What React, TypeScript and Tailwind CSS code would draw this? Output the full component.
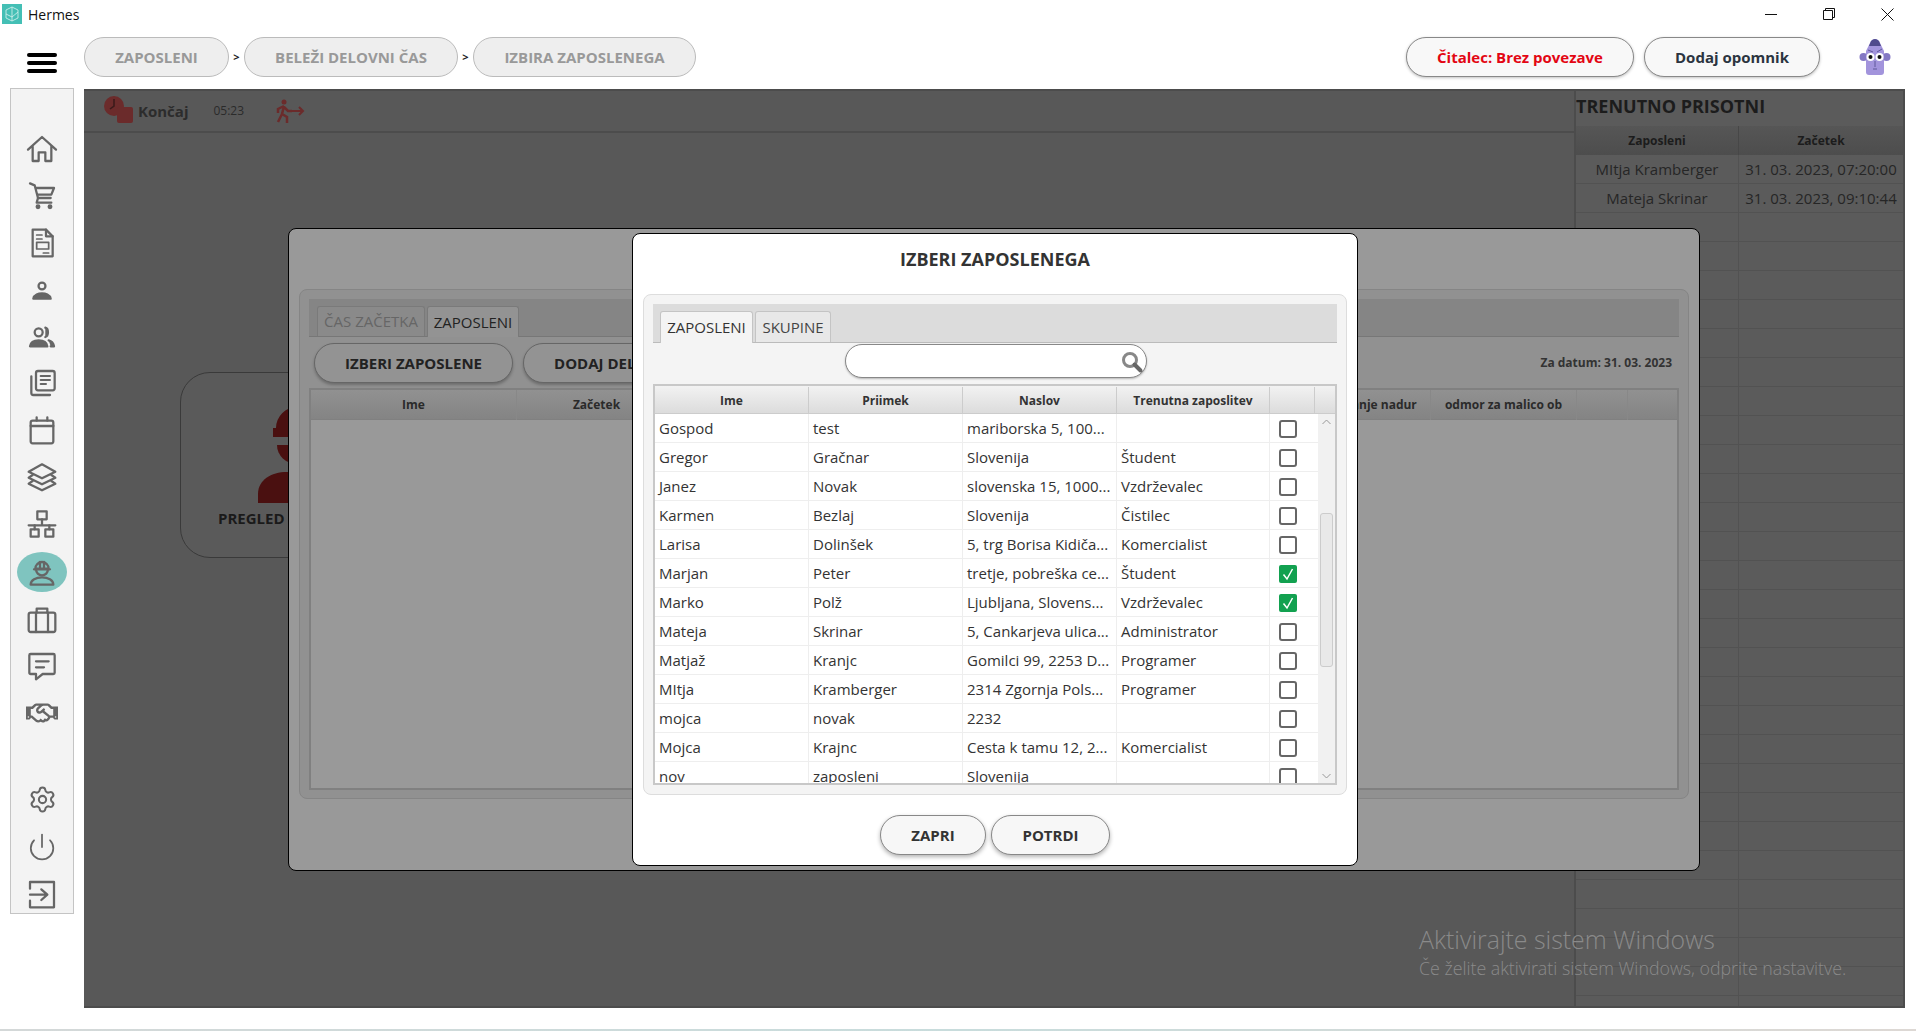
import { Power, Settings } from "lucide-react";
import { FaRegHandshake } from "react-icons/fa";

const font = { fontFamily: '"Open Sans", "Noto Sans", sans-serif' };

const employees = [
  ["Gospod", "test", "mariborska 5, 100...", "", false],
  ["Gregor", "Gračnar", "Slovenija", "Študent", false],
  ["Janez", "Novak", "slovenska 15, 1000...", "Vzdrževalec", false],
  ["Karmen", "Bezlaj", "Slovenija", "Čistilec", false],
  ["Larisa", "Dolinšek", "5, trg Borisa Kidiča...", "Komercialist", false],
  ["Marjan", "Peter", "tretje, pobreška ce...", "Študent", true],
  ["Marko", "Polž", "Ljubljana, Slovens...", "Vzdrževalec", true],
  ["Mateja", "Skrinar", "5, Cankarjeva ulica...", "Administrator", false],
  ["Matjaž", "Kranjc", "Gomilci 99, 2253 D...", "Programer", false],
  ["MItja", "Kramberger", "2314 Zgornja Pols...", "Programer", false],
  ["mojca", "novak", "2232", "", false],
  ["Mojca", "Krajnc", "Cesta k tamu 12, 2...", "Komercialist", false],
  ["nov", "zaposleni", "Slovenija", "", false],
] as const;

function Ico({ children }: { children: React.ReactNode }) {
  return (
    <svg width="32" height="32" viewBox="0 0 24 24" fill="none" stroke="#666" strokeWidth="1.7" strokeLinejoin="round" strokeLinecap="round">
      {children}
    </svg>
  );
}

const topIcons = [
  <Ico key="home"><path d="M1.500 12.500 12 3l10.500 9.500M5 10v11h4.500v-6.500h5V21H19V10" /></Ico>,
  <Ico key="cart"><path d="M3 2.500 6.500 4 9 13.500h9.500M7.500 6H21l-2 5H9" /><path d="M9 13.500 8 17h11" /><circle cx="9" cy="20" r="1" fill="#666" /><circle cx="18" cy="20" r="1" fill="#666" /></Ico>,
  <Ico key="doc"><path d="M5 2h10l5 5v15H5z" /><path d="M15 2v5h5" /><path d="M8 6h4M8 9h4M8 11.500h9v5H8zM13 19.500h4" strokeWidth="1.300" /></Ico>,
  <Ico key="person"><circle cx="12" cy="9" r="2.600" /><path d="M5.500 18.500c.5-3 4-4 6.500-4s6 1 6.500 4z" fill="#666" /></Ico>,
  <Ico key="people"><circle cx="9.500" cy="8.500" r="3" /><path d="M14.500 5c2.600.6 2.600 6.400 0 7" fill="#666" /><path d="M3 19c.5-3.500 4-4.500 6.500-4.500S15.500 15.500 16 19z" fill="#666" /><path d="M17 14.500c2 .5 3.500 2 4 4.500h-2.500" fill="#666" /></Ico>,
  <Ico key="stack"><path d="M4 7v12.500a1.500 1.500 0 0 0 1.500 1.500H18" /><rect x="7.500" y="3" width="14" height="14.500" rx="1.500" /><path d="M11 6.800h7M11 9.800h7M11 12.800h4" strokeWidth="1.500" /></Ico>,
  <Ico key="calendar"><rect x="3.500" y="5" width="17" height="17" rx="1.500" /><path d="M3.500 9h17M8 2.500V5M16 2.500V5" /></Ico>,
  <Ico key="layers"><path d="M12 2.500 22 8l-10 5L2 8z" /><path d="M5 10.500 2 12.500l10 5 10-5-3-2" /><path d="M5 15 2 17l10 5 10-5-3-2" /></Ico>,
  <Ico key="sitemap"><rect x="8.500" y="2.500" width="7" height="6" /><path d="M12 8.500V13M2 13h20" /><rect x="3.500" y="16" width="6" height="5.500" /><rect x="14.500" y="16" width="6" height="5.500" /><path d="M6.500 13v3M17.500 13v3" /></Ico>,
  <span key="worker" className="flex h-10 w-[50px] items-center justify-center rounded-[50%] bg-[#7fc4bf]">
    <Ico><path d="M7 9.500a5 5 0 0 1 10 0zM6 10h12M10.500 4.500v4M13.500 4.500v4M7.500 10a4.500 4.500 0 0 0 9 0" /><path d="M3.500 21.500c0-3.500 4-5.500 8.500-5.500s8.500 2 8.500 5.500z" /></Ico>
  </span>,
  <Ico key="case"><rect x="2" y="6.500" width="20" height="14.500" rx="1.500" /><path d="M8 6.500V3.500h8v3M7.500 6.500V21M16.500 6.500V21" /></Ico>,
  <Ico key="chat"><path d="M3.500 3h17a1 1 0 0 1 1 1v13a1 1 0 0 1-1 1h-8l-5 4v-4h-4a1 1 0 0 1-1-1V4a1 1 0 0 1 1-1z" /><path d="M7.500 8.500h9.500M7.500 13h6" /></Ico>,
  <FaRegHandshake key="hands" size={32} color="#666" />,
];

const bottomIcons = [
  <Settings key="gear" size={29} color="#666" strokeWidth={1.7} />,
  <Power key="power" size={30} color="#666" strokeWidth={1.4} />,
  <Ico key="login"><path d="M3 8V3h18v19H3v-5M3 12.500h12M11.500 8.500l4.500 4-4.500 4" /></Ico>,
];

function Checkbox({ checked }: { checked: boolean }) {
  if (checked) {
    return (
      <span className="mt-px flex h-[18px] w-[18px] items-center justify-center rounded-[2px] bg-[#12a150]">
        <svg width="14" height="14" viewBox="0 0 14 14" fill="none" stroke="#fff" strokeWidth="1.5"><path d="M2.500 7.500 6 12l5.500-10" /></svg>
      </span>
    );
  }
  return <span className="mt-px h-[18px] w-[18px] rounded-[3px] border-2 border-[#666] bg-white" />;
}

function EmployeeDialog() {
  return (
    <div className="absolute left-[548px] top-[142px] flex h-[633px] w-[726px] flex-col rounded-lg border border-black bg-white">
      <h2 className="flex h-[60px] items-center justify-center pb-[10px] text-[18px] font-bold text-[#333]">IZBERI ZAPOSLENEGA</h2>
      <div className="mx-[10px] flex h-[501px] flex-col rounded-lg border border-[#ddd] bg-[#f4f4f4] pl-[9px] pr-[9px] pt-[9px]">
        <div className="flex h-[39px] shrink-0 items-end gap-[2px] border-b border-[#bbb] bg-[#dcdcdc] pl-[7px]">
          <div className="-mb-px flex h-[32px] w-[93px] items-center justify-center rounded-t-[3px] border border-b-0 border-[#c4c4c4] bg-[#f4f4f4] text-[15px] text-[#333]">ZAPOSLENI</div>
          <div className="flex h-[31px] w-[76px] items-center justify-center rounded-t-[3px] border border-b-0 border-[#c4c4c4] bg-[#e8e8e8] text-[15px] text-[#444]">SKUPINE</div>
        </div>
        <div className="flex h-[41px] shrink-0 items-start justify-center pl-[2px] pt-px">
          <div className="flex h-[34px] w-[302px] items-center justify-end rounded-full border border-[#888] bg-white pr-[1px] shadow-[0_1px_2px_rgba(0,0,0,0.25)]">
            <svg width="26" height="26" viewBox="0 0 26 26" fill="none" stroke="#888"><circle cx="11" cy="12" r="6.500" strokeWidth="3" /><path d="m15.500 16.500 6 6" strokeWidth="4" strokeLinecap="round" stroke="#666" /></svg>
          </div>
        </div>
        <div className="flex h-[401px] shrink-0 flex-col border-2 border-[#c8c8c8] bg-white">
          <div className="grid h-[28px] shrink-0 grid-cols-[154px_154px_154px_153px_45px_1fr] border-b border-[#ccc] bg-gradient-to-b from-[#f2f2f2] to-[#dcdcdc] pt-px text-center text-[12px] font-bold leading-[27px] text-[#333]">
            <div className="border-r border-[#ccc]">Ime</div>
            <div className="border-r border-[#ccc]">Priimek</div>
            <div className="border-r border-[#ccc]">Naslov</div>
            <div className="border-r border-[#ccc]">Trenutna zaposlitev</div>
            <div className="border-r border-[#ccc]" />
            <div />
          </div>
          <div className="flex h-[369px] overflow-hidden">
            <div className="flex-1">
              {employees.map((row) => (
                <div key={row[0] + row[1]} className="grid h-[29px] grid-cols-[154px_154px_154px_153px_1fr] border-b border-[#eee] text-[15px] leading-[28px] text-[#333]">
                  <div className="border-r border-[#eee] pl-[4px]">{row[0]}</div>
                  <div className="border-r border-[#eee] pl-[4px]">{row[1]}</div>
                  <div className="whitespace-nowrap border-r border-[#eee] pl-[4px]">{row[2]}</div>
                  <div className="border-r border-[#eee] pl-[4px]">{row[3]}</div>
                  <div className="flex items-center pl-[9px]"><Checkbox checked={row[4]} /></div>
                </div>
              ))}
            </div>
            <div className="flex w-[17px] shrink-0 flex-col items-center bg-[#f1f1f1]">
              <svg className="mt-[3px] shrink-0" width="11" height="11" viewBox="0 0 11 11" fill="none" stroke="#999"><path d="m1.500 7 4-4 4 4" /></svg>
              <div className="mt-[85px] h-[154px] w-[13px] shrink-0 rounded-[3px] border border-[#ccc] bg-[#e9e9e9]" />
              <svg className="mt-auto mb-[2px] shrink-0" width="11" height="11" viewBox="0 0 11 11" fill="none" stroke="#999"><path d="m1.500 4 4 4 4-4" /></svg>
            </div>
          </div>
        </div>
      </div>
      <div className="flex flex-1 items-start justify-center gap-[5px] pt-[20px]">
        <button className="h-10 w-[106px] rounded-full border border-[#888] bg-[#f7f7f7] text-[15px] font-bold text-[#333] shadow-[0_2px_4px_rgba(0,0,0,0.3)]">ZAPRI</button>
        <button className="h-10 w-[119px] rounded-full border border-[#888] bg-[#f7f7f7] text-[15px] font-bold text-[#333] shadow-[0_2px_4px_rgba(0,0,0,0.3)]">POTRDI</button>
      </div>
    </div>
  );
}

function WorkDialog() {
  return (
    <div className="absolute left-[204px] top-[137px] h-[643px] w-[1412px] rounded-lg border border-black bg-[#999] pl-[10px] pr-[10px] pt-[60px]">
      <div className="flex h-[510px] flex-col rounded-lg border border-[#858585] bg-[#919191] px-[9px] pt-[9px]">
        <div className="flex h-[38px] shrink-0 items-end gap-[2px] border-b border-[#777] bg-[#858585] pl-[8px]">
          <div className="flex h-[30px] w-[108px] items-center justify-center rounded-t-[3px] border border-b-0 border-[#7a7a7a] bg-[#8a8a8a] text-[15px] text-[#666]">ČAS ZAČETKA</div>
          <div className="-mb-px flex h-[31px] w-[92px] items-center justify-center rounded-t-[3px] border border-b-0 border-[#7a7a7a] bg-[#939393] text-[15px] text-[#222]">ZAPOSLENI</div>
        </div>
        <div className="flex h-[51px] shrink-0 items-start justify-between pl-[5px] pr-[7px] pt-[6px]">
          <div className="flex gap-[10px]">
            <button className="h-10 rounded-full border border-[#666] bg-[#939393] px-[30px] text-[15px] font-bold text-[#222] shadow-[0_2px_3px_rgba(0,0,0,0.25)]">IZBERI ZAPOSLENE</button>
            <button className="h-10 rounded-full border border-[#666] bg-[#939393] px-[30px] text-[15px] font-bold text-[#222] shadow-[0_2px_3px_rgba(0,0,0,0.25)]">DODAJ DELAVCA</button>
          </div>
          <span className="mt-[11px] text-[12px] font-bold text-[#333]">Za datum: 31. 03. 2023</span>
        </div>
        <div className="h-[402px] shrink-0 border-2 border-[#808080] bg-[#999]">
          <div className="grid h-[30px] grid-cols-[206px_160px_1fr_114px_146px_51px_49px] border-b border-[#808080] bg-gradient-to-b from-[#919191] to-[#848484] text-center text-[12px] font-bold leading-[30px] text-[#2a2a2a]">
            <div className="border-r border-[#888]">Ime</div>
            <div className="border-r border-[#888]">Začetek</div>
            <div className="border-r border-[#888]">Konec</div>
            <div className="border-r border-[#888]">trajanje nadur</div>
            <div className="border-r border-[#888]">odmor za malico ob</div>
            <div className="border-r border-[#888]" />
            <div />
          </div>
        </div>
      </div>
    </div>
  );
}

function PresentPanel() {
  return (
    <aside className="flex w-[331px] shrink-0 flex-col overflow-hidden border-l-2 border-r-2 border-[#4c4c4c] bg-[#5b5b5b]">
      <h2 className="flex h-[35px] shrink-0 items-center pb-[5px] text-[18px] font-bold text-[#1c1c1c]">TRENUTNO PRISOTNI</h2>
      <div className="grid h-[29px] shrink-0 grid-cols-[163px_1fr] bg-gradient-to-b from-[#565656] to-[#4d4d4d] text-center text-[12px] font-bold leading-[29px] text-[#1c1c1c]">
        <div className="border-r border-[#474747]">Zaposleni</div>
        <div>Začetek</div>
      </div>
      <div className="grid grid-cols-[163px_1fr] text-center text-[15px] leading-[28px] text-[#262626]">
        {[["MItja Kramberger", "31. 03. 2023, 07:20:00"], ["Mateja Skrinar", "31. 03. 2023, 09:10:44"]].map((r) => (
          <div key={r[0]} className="contents">
            <div className="h-[29px] border-b border-r border-[#525252]">{r[0]}</div>
            <div className="h-[29px] whitespace-nowrap border-b border-[#525252]">{r[1]}</div>
          </div>
        ))}
        {Array.from({ length: 28 }).map((_, i) => (
          <div key={i} className="contents">
            <div className="h-[29px] border-b border-r border-[#525252]" />
            <div className="h-[29px] border-b border-[#525252]" />
          </div>
        ))}
      </div>
    </aside>
  );
}

export default function App() {
  return (
    <div className="flex h-[1031px] w-[1916px] flex-col overflow-hidden bg-white" style={font}>
      <div className="flex h-[28px] shrink-0 items-center justify-between">
        <div className="flex items-center">
          <div className="ml-[2px] flex h-[20px] w-[20px] items-center justify-center bg-[#44bfb5]">
            <svg width="14" height="16" viewBox="0 0 14 16" fill="none" stroke="#d8f2ef" strokeWidth="0.8"><path d="M7 1 13 4v8l-6 3-6-3V4zM7 1v14M1 8l6 3 6-5" /></svg>
          </div>
          <span className="ml-[6px] text-[14px] text-[#111]">Hermes</span>
        </div>
        <div className="flex">
          <div className="flex h-[28px] w-[58px] items-center justify-center">
            <svg width="12" height="12" viewBox="0 0 12 12" stroke="#111"><path d="M0 6.500h12" /></svg>
          </div>
          <div className="flex h-[28px] w-[58px] items-center justify-center">
            <svg width="12" height="12" viewBox="0 0 12 12" fill="none" stroke="#111"><path d="M.5 2.500h9v9h-9zM2.500 2.500v-2h9v9h-2" /></svg>
          </div>
          <div className="flex h-[28px] w-[58px] items-center justify-center">
            <svg width="13" height="13" viewBox="0 0 13 13" stroke="#111"><path d="m.5.5 12 12M12.500.5l-12 12" /></svg>
          </div>
        </div>
      </div>

      <header className="flex h-[61px] shrink-0 items-start pt-[9px]">
        <div className="ml-[27px] mt-[16px] flex h-[20px] w-[30px] flex-col justify-between">
          <span className="h-1 rounded-full bg-black" />
          <span className="h-1 rounded-full bg-black" />
          <span className="h-1 rounded-full bg-black" />
        </div>
        <nav className="ml-[27px] flex items-center text-[15px] font-bold text-[#999]">
          <span className="flex h-10 w-[145px] items-center justify-center rounded-full border border-[#bbb] bg-[#eee]">ZAPOSLENI</span>
          <span className="w-[15px] text-center text-[11px] text-[#222]">&gt;</span>
          <span className="flex h-10 w-[214px] items-center justify-center rounded-full border border-[#bbb] bg-[#eee]">BELEŽI DELOVNI ČAS</span>
          <span className="w-[15px] text-center text-[11px] text-[#222]">&gt;</span>
          <span className="flex h-10 w-[223px] items-center justify-center rounded-full border border-[#bbb] bg-[#eee]">IZBIRA ZAPOSLENEGA</span>
        </nav>
        <div className="ml-auto flex items-center text-[15px] font-bold">
          <button className="h-10 w-[228px] rounded-full border border-[#888] bg-[#f8f8f8] text-[#e30613] shadow-[0_1px_3px_rgba(0,0,0,0.25)]">Čitalec: Brez povezave</button>
          <button className="ml-[10px] h-10 w-[176px] rounded-full border border-[#888] bg-[#f8f8f8] text-[#2b3440] shadow-[0_1px_3px_rgba(0,0,0,0.25)]">Dodaj opomnik</button>
          <svg className="ml-[39px] mr-[25px]" width="32" height="38" viewBox="0 0 32 38">
            <circle cx="4.500" cy="19" r="4" fill="#8478c4" />
            <circle cx="27.500" cy="19" r="4" fill="#8478c4" />
            <path d="M7 13 12 3q4-4 8 0l5 10v21q0 3-3 3H10q-3 0-3-3z" fill="#a294dc" />
            <path d="M12 3q4-4 8 0l2 5H10z" fill="#4f4a8c" />
            <circle cx="11.500" cy="19" r="4" fill="#fff" />
            <circle cx="20.500" cy="19" r="4" fill="#fff" />
            <circle cx="11.500" cy="19" r="2" fill="#111" />
            <circle cx="20.500" cy="19" r="2" fill="#111" />
            <path d="M16 23v6M14 31h4M9 12l5 2M23 11l-5 3" stroke="#4f4a8c" strokeWidth="0.8" />
          </svg>
        </div>
      </header>

      <div className="flex h-[919px] shrink-0">
        <nav className="ml-[10px] -mt-px flex h-[826px] w-[64px] shrink-0 flex-col items-center border border-[#c4c4c4] bg-[#f3f3f3] pt-[37px]">
          {topIcons.map((icon, i) => (
            <div key={i} className={i === 9 ? "flex h-[49px] w-[50px] shrink-0 items-center justify-center" : "flex h-[46.800px] w-[50px] shrink-0 items-center justify-center"}>
              {icon}
            </div>
          ))}
          <div className="h-[40px] shrink-0" />
          {bottomIcons.map((icon, i) => (
            <div key={i} className="flex h-[46.800px] w-[50px] shrink-0 items-center justify-center">{icon}</div>
          ))}
        </nav>

        <main className="relative ml-[10px] flex w-[1821px] shrink-0 border-t-2 border-b-2 border-[#4c4c4c] bg-[#585858]">
          <div className="flex-1">
            <div className="flex h-[42px] items-center border-b-2 border-[#4c4c4c] pl-[20px]">
              <svg width="34" height="30" viewBox="0 0 34 30">
                <circle cx="10" cy="10" r="10" fill="#6b2b2b" />
                <path d="M10 3v7l-4 3" stroke="#3a1a1a" strokeWidth="1.500" fill="none" />
                <rect x="13" y="11" width="16" height="16" rx="2" fill="#6b2b2b" />
              </svg>
              <span className="text-[15px] font-bold text-[#2c2c2c]">Končaj</span>
              <span className="ml-[25px] text-[12px] text-[#2b2b2b]">05:23</span>
              <svg className="ml-[31px]" width="30" height="24" viewBox="0 0 30 24" fill="none" stroke="#6b2b2b" strokeWidth="2.500">
                <circle cx="9" cy="3" r="2.500" fill="#6b2b2b" stroke="none" />
                <path d="M9 7 7 15l5 3v6M7 15l-4 8M9 7 3 10v4M9 8l4 4h4" />
                <path d="M16 12h12M24 8l4 4-4 4" strokeWidth="2" />
              </svg>
            </div>
            <div className="ml-[96px] mt-[239px] flex h-[186px] w-[234px] flex-col items-start rounded-[30px] border border-[#3a3a3a] bg-[#5a5a5a] pt-[31px]">
              <svg className="ml-[76px] shrink-0" width="80" height="100" viewBox="0 0 80 100" fill="#4a1010">
                <path d="M19 24a21 21 0 0 1 42 0h3v9H16v-9z" />
                <path d="M20 41h40a20 19 0 0 1-40 0z" />
                <path d="M1 99V90C1 76 14 68 30 68h20c16 0 29 8 29 22v9z" />
              </svg>
              <span className="mt-[4px] pl-[37px] text-[15px] font-bold leading-5 text-[#1a1a1a]">PREGLED DELA</span>
            </div>
          </div>
          <PresentPanel />

          <WorkDialog />
          <EmployeeDialog />

          <div className="absolute left-[1335px] top-[832px] text-[#8a8a8a]">
            <p className="text-[24.900px] font-light leading-8">Aktivirajte sistem Windows</p>
            <p className="mt-[3px] text-[17.800px] font-light leading-5">Če želite aktivirati sistem Windows, odprite nastavitve.</p>
          </div>
        </main>
      </div>

      <div className="mt-[21px] h-[2px] bg-gradient-to-r from-[#d4d8d8] via-[#c8dcdc] to-[#ddd8d4]" />
    </div>
  );
}
